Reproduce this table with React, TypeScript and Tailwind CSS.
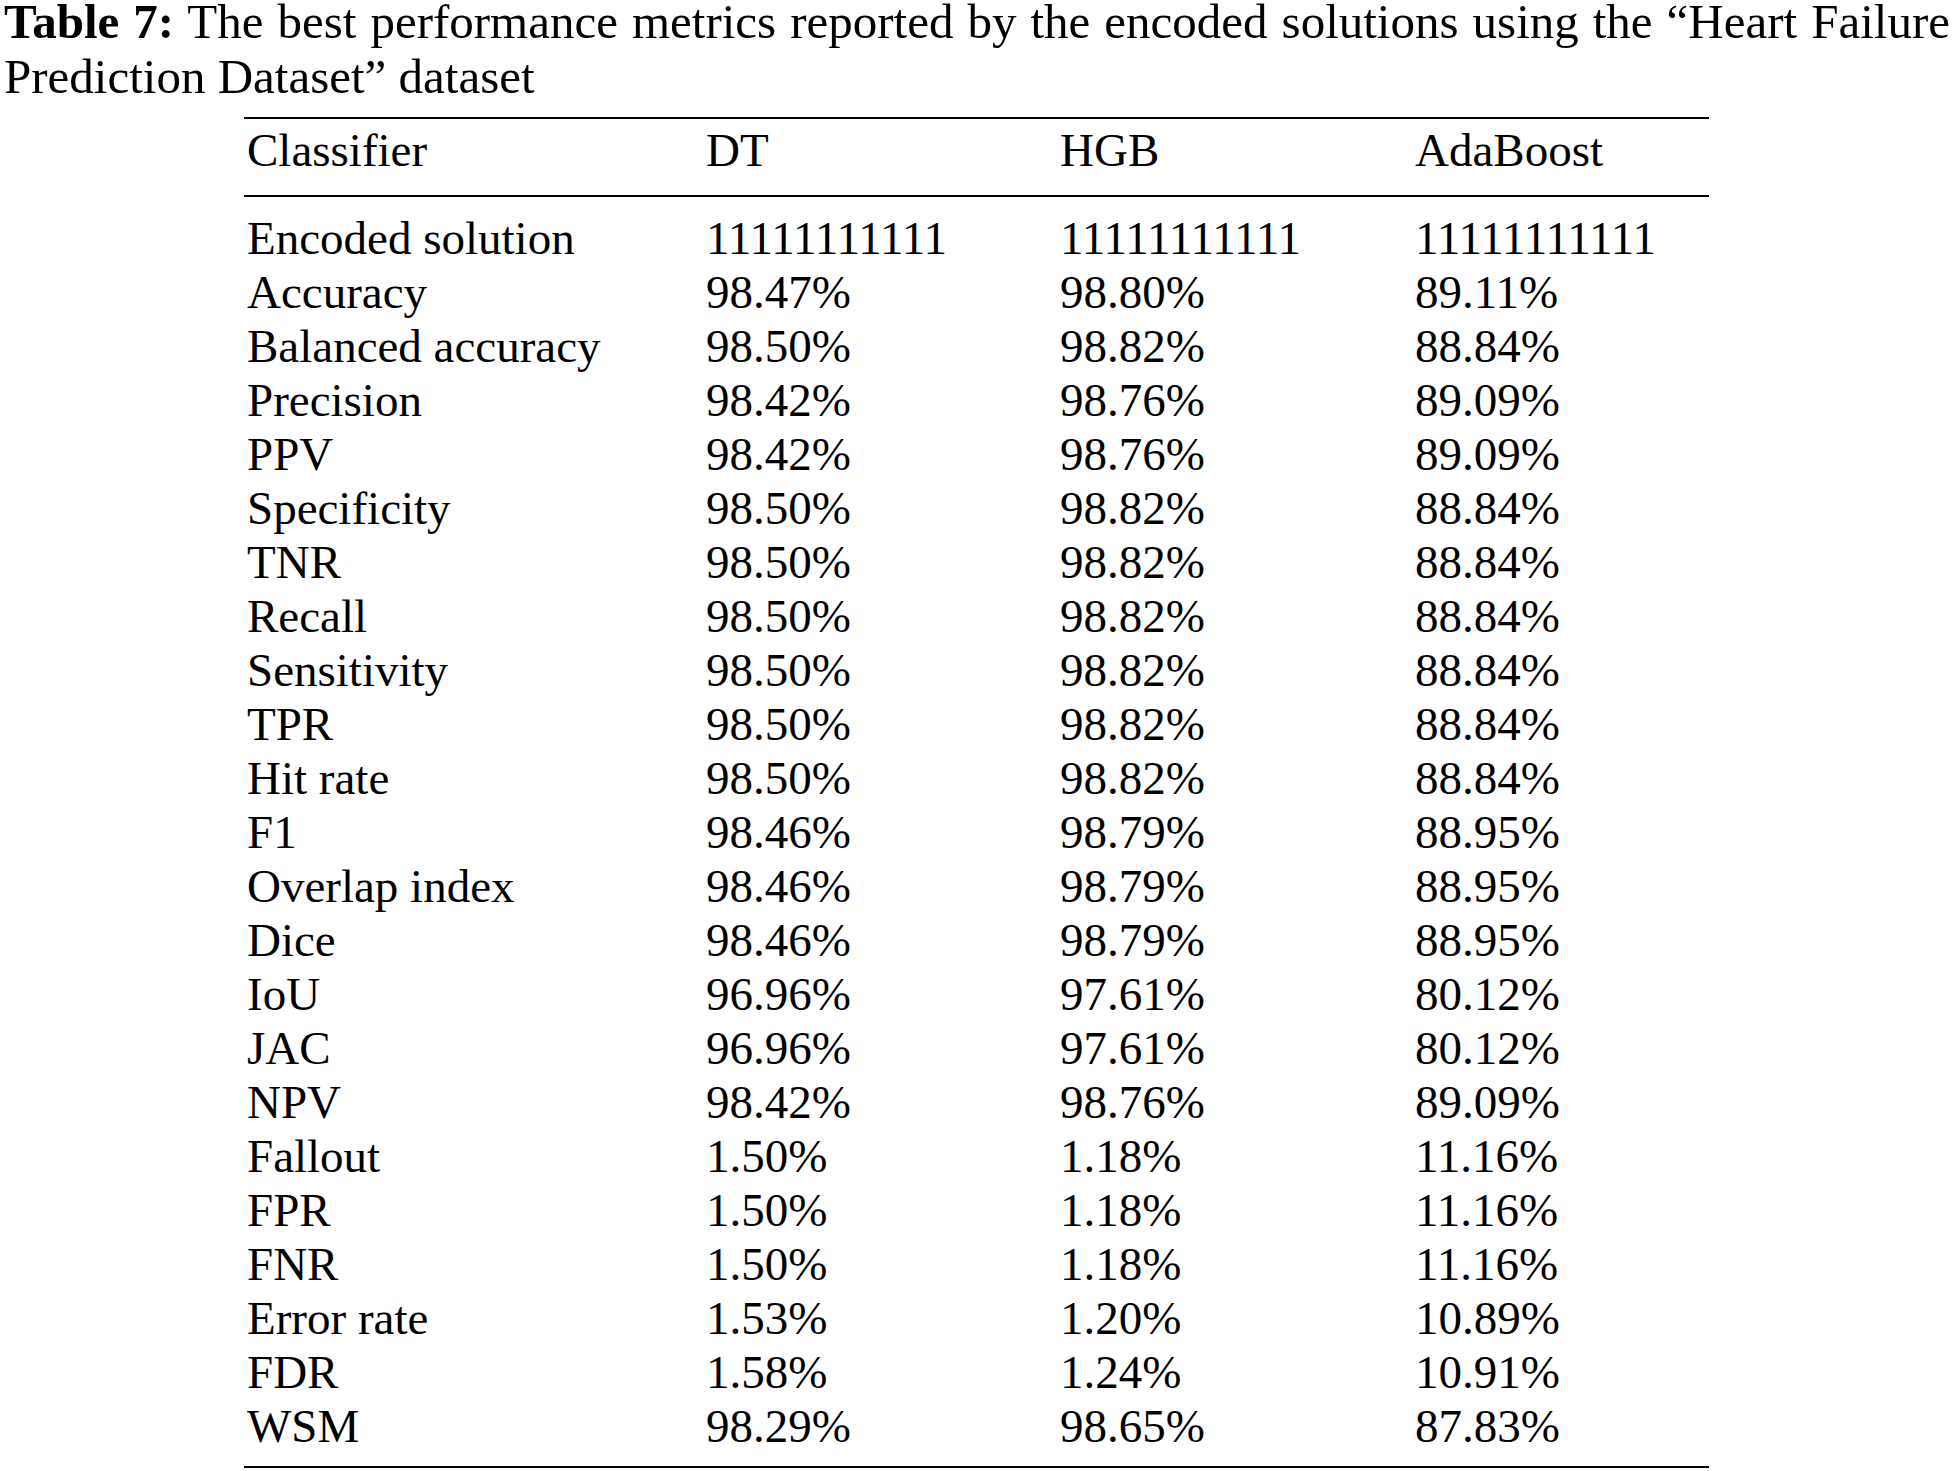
import React from "react";

const rows: [string, string, string, string][] = [
  ["Encoded solution", "11111111111", "11111111111", "11111111111"],
  ["Accuracy", "98.47%", "98.80%", "89.11%"],
  ["Balanced accuracy", "98.50%", "98.82%", "88.84%"],
  ["Precision", "98.42%", "98.76%", "89.09%"],
  ["PPV", "98.42%", "98.76%", "89.09%"],
  ["Specificity", "98.50%", "98.82%", "88.84%"],
  ["TNR", "98.50%", "98.82%", "88.84%"],
  ["Recall", "98.50%", "98.82%", "88.84%"],
  ["Sensitivity", "98.50%", "98.82%", "88.84%"],
  ["TPR", "98.50%", "98.82%", "88.84%"],
  ["Hit rate", "98.50%", "98.82%", "88.84%"],
  ["F1", "98.46%", "98.79%", "88.95%"],
  ["Overlap index", "98.46%", "98.79%", "88.95%"],
  ["Dice", "98.46%", "98.79%", "88.95%"],
  ["IoU", "96.96%", "97.61%", "80.12%"],
  ["JAC", "96.96%", "97.61%", "80.12%"],
  ["NPV", "98.42%", "98.76%", "89.09%"],
  ["Fallout", "1.50%", "1.18%", "11.16%"],
  ["FPR", "1.50%", "1.18%", "11.16%"],
  ["FNR", "1.50%", "1.18%", "11.16%"],
  ["Error rate", "1.53%", "1.20%", "10.89%"],
  ["FDR", "1.58%", "1.24%", "10.91%"],
  ["WSM", "98.29%", "98.65%", "87.83%"],
];

export default function App() {
  return (
    <div className="w-[1954px] min-h-[1471px] bg-white text-black font-['Liberation_Serif','Times_New_Roman',serif]">
      <div className="px-[4px] text-[49px]">
        <p className="leading-[44px] text-justify [text-align-last:justify] whitespace-nowrap">
          <b>Table 7:</b> The best performance metrics reported by the encoded solutions using the “Heart Failure
        </p>
        <p className="mt-[5px] leading-[56px]">Prediction Dataset” dataset</p>
      </div>
      <div className="ml-[244px] mt-[12px] w-[1465px] border-t-2 border-b-2 border-black">
        <div className="grid grid-cols-[459px_354px_355px_1fr] pl-[3px] pt-[4px] pb-[18px] border-b-2 border-black text-[47px] leading-[54px]">
          <div>Classifier</div>
          <div>DT</div>
          <div>HGB</div>
          <div>AdaBoost</div>
        </div>
        <div className="pt-[14px] pb-[13px] text-[47px] leading-[54px]">
          {rows.map((r) => (
            <div key={r[0]} className="grid grid-cols-[459px_354px_355px_1fr] pl-[3px]">
              <div>{r[0]}</div>
              <div>{r[1]}</div>
              <div>{r[2]}</div>
              <div>{r[3]}</div>
            </div>
          ))}
        </div>
      </div>
    </div>
  );
}
